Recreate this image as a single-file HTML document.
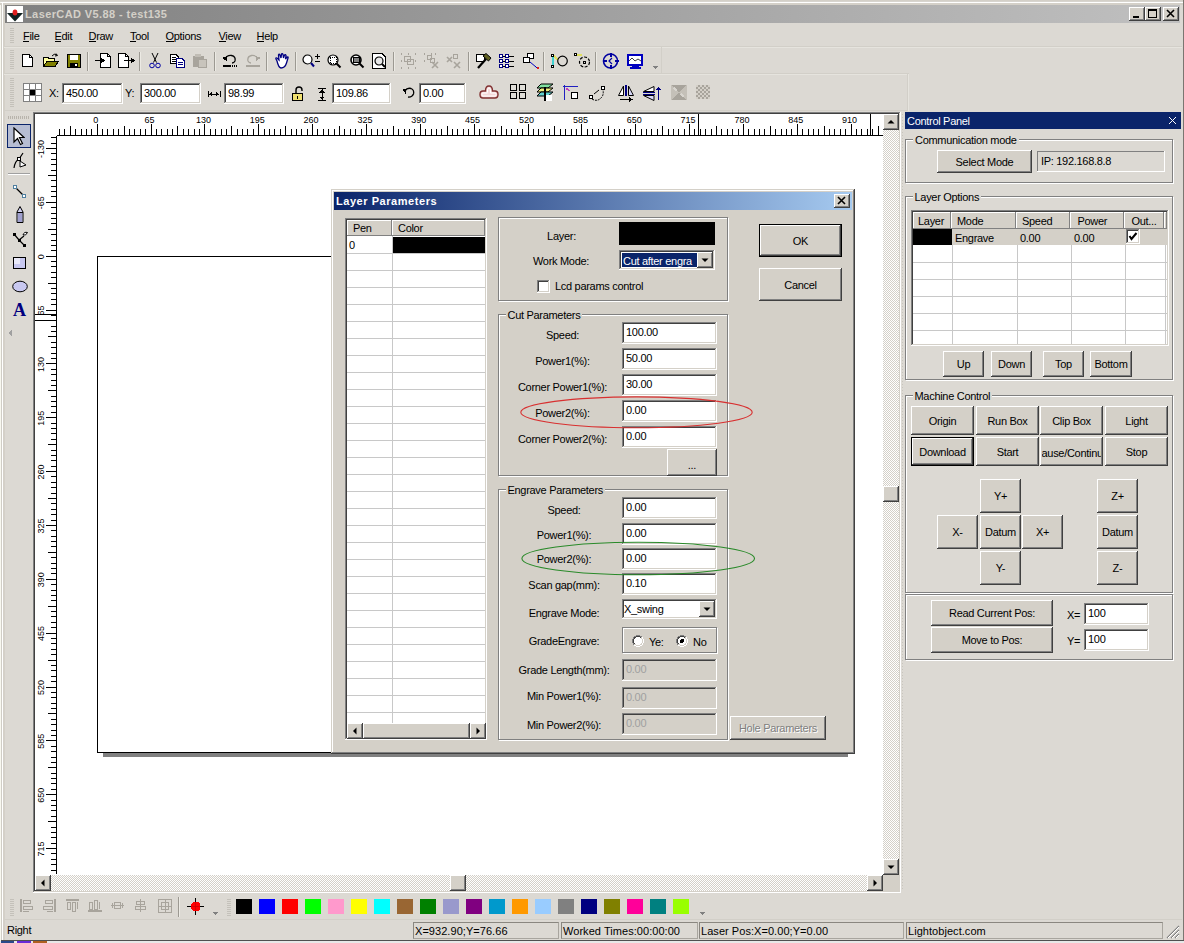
<!DOCTYPE html><html><head><meta charset="utf-8"><style>
*{margin:0;padding:0;box-sizing:border-box}
html,body{width:1184px;height:943px;overflow:hidden;background:#dcd9d3;font-family:"Liberation Sans",sans-serif;font-size:11px;color:#000}
div{position:absolute}
.t{white-space:nowrap;line-height:13px;letter-spacing:-0.3px}
.btn{background:#d4d0c8;box-shadow:inset -1px -1px #404040,inset 1px 1px #fff,inset -2px -2px #808080,inset 2px 2px #d4d0c8}
.sunk{box-shadow:inset -1px -1px #fff,inset 1px 1px #808080,inset -2px -2px #d4d0c8,inset 2px 2px #404040}
.etch{border:1px solid #808080;box-shadow:1px 1px 0 0 #fff,inset 1px 1px 0 0 #fff}
.chk{background:repeating-conic-gradient(#d4d0c8 0 25%,#fff 0 50%) 0 0/2px 2px}
.sunk1{box-shadow:inset -1px -1px #fff,inset 1px 1px #808080}.hdr{background:#d4d0c8;box-shadow:inset -1px -1px #808080,inset 1px 1px #fff}</style></head><body><div style="left:0px;top:0px;width:1px;height:943px;background:#f8f8f0"></div>
<div style="left:1px;top:0px;width:1px;height:941px;background:#d0cdc6"></div>
<div style="left:3px;top:0px;width:2px;height:941px;background:#d4d0c8"></div>
<div style="left:0px;top:0px;width:1184px;height:1px;background:#d4d0c8"></div>
<div style="left:0px;top:1px;width:1184px;height:1px;background:#d8d5cf"></div>
<div style="left:0px;top:3px;width:1184px;height:2px;background:#d4d0c8"></div>
<div style="left:1px;top:2px;width:1182px;height:1px;background:#fff"></div>
<div style="left:2px;top:2px;width:1px;height:938px;background:#fff"></div>
<div style="left:1183px;top:0px;width:1px;height:941px;background:#7a7670"></div>
<div style="left:1px;top:940px;width:1183px;height:1px;background:#505050"></div>
<div style="left:0px;top:941px;width:1184px;height:2px;background:#e8e8e8"></div>
<div style="left:1px;top:941px;width:13px;height:2px;background:#2a4a8a"></div>
<div style="left:17px;top:941px;width:14px;height:2px;background:#6a2ad8"></div>
<div style="left:33px;top:941px;width:14px;height:2px;background:#b06020"></div>
<div style="left:5px;top:5px;width:1175px;height:18px;background:linear-gradient(to right,#808080,#c0c0c0)"></div>
<svg style="position:absolute;left:7px;top:6px" width="16" height="16" viewBox="0 0 16 16" shape-rendering="crispEdges"><rect x="0" y="0" width="16" height="16" fill="#fff"/><polygon points="0,7 16,7 8,15.5" fill="#102020" shape-rendering="auto"/><ellipse cx="8" cy="6.5" rx="2.4" ry="3" fill="#e02020" shape-rendering="auto"/></svg>
<div class="t" style="left:25px;top:8px;font-weight:bold;color:#d4d0c8;letter-spacing:0.4px">LaserCAD V5.88 - test135</div>
<div class="btn" style="left:1129px;top:7px;width:16px;height:14px;"></div>
<div class="btn" style="left:1145px;top:7px;width:16px;height:14px;"></div>
<div class="btn" style="left:1163px;top:7px;width:16px;height:14px;"></div>
<svg style="position:absolute;left:1129px;top:7px" width="16" height="14" viewBox="0 0 16 14" shape-rendering="crispEdges"><rect x="4" y="9" width="6" height="2" fill="#000"/></svg>
<svg style="position:absolute;left:1145px;top:7px" width="16" height="14" viewBox="0 0 16 14" shape-rendering="crispEdges"><rect x="3.5" y="2.5" width="8" height="8" fill="none" stroke="#000"/><rect x="3" y="2" width="9" height="2" fill="#000"/></svg>
<svg style="position:absolute;left:1163px;top:7px" width="16" height="14" viewBox="0 0 16 14" shape-rendering="crispEdges"><path d="M4 3 L11 10 M11 3 L4 10" stroke="#000" stroke-width="1.6" shape-rendering="auto"/></svg>
<div style="left:10px;top:28px;width:4px;height:1px;background:#c4c1ba"></div>
<div style="left:10px;top:30px;width:4px;height:1px;background:#c4c1ba"></div>
<div style="left:10px;top:32px;width:4px;height:1px;background:#c4c1ba"></div>
<div style="left:10px;top:34px;width:4px;height:1px;background:#c4c1ba"></div>
<div style="left:10px;top:36px;width:4px;height:1px;background:#c4c1ba"></div>
<div style="left:10px;top:38px;width:4px;height:1px;background:#c4c1ba"></div>
<div style="left:10px;top:40px;width:4px;height:1px;background:#c4c1ba"></div>
<div style="left:10px;top:42px;width:4px;height:1px;background:#c4c1ba"></div>
<div class="t" style="left:23px;top:29.5px;">File</div>
<div style="left:23px;top:41px;width:6px;height:1px;background:#000"></div>
<div class="t" style="left:54.5px;top:29.5px;">Edit</div>
<div style="left:54.5px;top:41px;width:6px;height:1px;background:#000"></div>
<div class="t" style="left:88.5px;top:29.5px;">Draw</div>
<div style="left:88.5px;top:41px;width:7px;height:1px;background:#000"></div>
<div class="t" style="left:130px;top:29.5px;">Tool</div>
<div style="left:130px;top:41px;width:6px;height:1px;background:#000"></div>
<div class="t" style="left:165.5px;top:29.5px;">Options</div>
<div style="left:165.5px;top:41px;width:8px;height:1px;background:#000"></div>
<div class="t" style="left:218.5px;top:29.5px;">View</div>
<div style="left:218.5px;top:41px;width:7px;height:1px;background:#000"></div>
<div class="t" style="left:256.5px;top:29.5px;">Help</div>
<div style="left:256.5px;top:41px;width:7px;height:1px;background:#000"></div>
<div style="left:4px;top:46px;width:1178px;height:1px;background:#d2cfc8"></div>
<div style="left:4px;top:47px;width:1178px;height:1px;background:#e6e4de"></div>
<div style="left:10px;top:50px;width:4px;height:1px;background:#c4c1ba"></div>
<div style="left:10px;top:52px;width:4px;height:1px;background:#c4c1ba"></div>
<div style="left:10px;top:54px;width:4px;height:1px;background:#c4c1ba"></div>
<div style="left:10px;top:56px;width:4px;height:1px;background:#c4c1ba"></div>
<div style="left:10px;top:58px;width:4px;height:1px;background:#c4c1ba"></div>
<div style="left:10px;top:60px;width:4px;height:1px;background:#c4c1ba"></div>
<div style="left:10px;top:62px;width:4px;height:1px;background:#c4c1ba"></div>
<div style="left:10px;top:64px;width:4px;height:1px;background:#c4c1ba"></div>
<div style="left:10px;top:66px;width:4px;height:1px;background:#c4c1ba"></div>
<div style="left:10px;top:68px;width:4px;height:1px;background:#c4c1ba"></div>
<div style="left:4px;top:73px;width:905px;height:1px;background:#d2cfc8"></div>
<div style="left:4px;top:74px;width:905px;height:1px;background:#e6e4de"></div>
<div style="left:661px;top:47px;width:1px;height:26px;background:#d2cfc8"></div>
<svg style="position:absolute;left:21px;top:54px" width="13" height="14" viewBox="0 0 13 14" shape-rendering="crispEdges"><path d="M1.5 0.5 H8.5 L11.5 3.5 V12.5 H1.5 Z" fill="#fff" stroke="#000"/><path d="M8.5 0.5 V3.5 H11.5" fill="none" stroke="#000"/></svg>
<svg style="position:absolute;left:43px;top:53px" width="17" height="15" viewBox="0 0 17 15" shape-rendering="crispEdges"><path d="M0.5 4.5 H5 L6 5.5 H11.5 V13.5 H0.5 Z" fill="#ffffa0" stroke="#000"/><path d="M0.5 13.5 L4 8.5 H15.5 L12 13.5 Z" fill="#808000" stroke="#000"/><path d="M9 3 Q11 0 14 2 M13 0.5 L14.5 2.5 L12 3" fill="none" stroke="#000" shape-rendering="auto"/></svg>
<svg style="position:absolute;left:67px;top:54px" width="15" height="15" viewBox="0 0 15 15" shape-rendering="crispEdges"><rect x="0.5" y="0.5" width="13" height="13" fill="#808000" stroke="#000"/><rect x="3" y="1" width="8" height="5" fill="#fff"/><rect x="3" y="9" width="8" height="4" fill="#000"/><rect x="8" y="10" width="2" height="2" fill="#fff"/></svg>
<div style="left:87px;top:52px;width:1px;height:19px;background:#9c9992"></div>
<div style="left:88px;top:52px;width:1px;height:19px;background:#eceae4"></div>
<svg style="position:absolute;left:95px;top:53px" width="17" height="16" viewBox="0 0 17 16" shape-rendering="crispEdges"><path d="M5.5 0.5 H12.5 L15.5 3.5 V14.5 H5.5 Z" fill="#fff" stroke="#000"/><path d="M12.5 0.5 V3.5 H15.5" fill="none" stroke="#000"/><rect x="0" y="7" width="8" height="1" fill="#000"/><path d="M6 4.5 L10 7.5 L6 10.5 Z" fill="#000"/></svg>
<svg style="position:absolute;left:118px;top:53px" width="18" height="16" viewBox="0 0 18 16" shape-rendering="crispEdges"><path d="M0.5 0.5 H7.5 L10.5 3.5 V14.5 H0.5 Z" fill="#fff" stroke="#000"/><path d="M7.5 0.5 V3.5 H10.5" fill="none" stroke="#000"/><rect x="6" y="7" width="8" height="1" fill="#000"/><path d="M13 4.5 L17 7.5 L13 10.5 Z" fill="#000"/></svg>
<div style="left:139px;top:52px;width:1px;height:19px;background:#9c9992"></div>
<div style="left:140px;top:52px;width:1px;height:19px;background:#eceae4"></div>
<svg style="position:absolute;left:149px;top:53px" width="12" height="16" viewBox="0 0 12 16" shape-rendering="crispEdges"><path d="M3 0 L7.5 9.5 M9 0 L4.5 9.5" stroke="#000" fill="none" shape-rendering="auto"/><circle cx="3" cy="12.5" r="2.3" fill="none" stroke="#0000a0" shape-rendering="auto"/><circle cx="9" cy="12.5" r="2.3" fill="none" stroke="#0000a0" shape-rendering="auto"/></svg>
<svg style="position:absolute;left:170px;top:54px" width="16" height="14" viewBox="0 0 16 14" shape-rendering="crispEdges"><path d="M0.5 0.5 H6 L8.5 3 V9.5 H0.5 Z" fill="#fff" stroke="#000"/><path d="M2 3.5 H6 M2 5.5 H6 M2 7.5 H6" stroke="#000"/><path d="M6.5 4.5 H12 L14.5 7 V13.5 H6.5 Z" fill="#fff" stroke="#000080"/><path d="M8 8.5 H13 M8 10.5 H13" stroke="#000080"/></svg>
<svg style="position:absolute;left:192px;top:53px" width="15" height="15" viewBox="0 0 15 15" shape-rendering="crispEdges"><rect x="0.5" y="2.5" width="11" height="11" fill="#a8a49c"/><rect x="3" y="0.5" width="6" height="3" fill="#c0bcb4"/><rect x="6.5" y="6.5" width="8" height="8" fill="#c8c4bc" stroke="#a8a49c"/></svg>
<div style="left:214px;top:52px;width:1px;height:19px;background:#9c9992"></div>
<div style="left:215px;top:52px;width:1px;height:19px;background:#eceae4"></div>
<svg style="position:absolute;left:222px;top:54px" width="16" height="13" viewBox="0 0 16 13" shape-rendering="crispEdges"><path d="M3 5 Q5 1 9.5 1.5 Q14 2.5 13 7 Q12 9 10 9" fill="none" stroke="#000" stroke-width="1.3" shape-rendering="auto"/><path d="M0 4 L5 2 L5 7 Z" fill="#000"/><rect x="1" y="11" width="8" height="2" fill="#000"/><rect x="10" y="11" width="1" height="2" fill="#000"/><rect x="12" y="11" width="1" height="2" fill="#000"/><rect x="14" y="11" width="1" height="2" fill="#000"/></svg>
<svg style="position:absolute;left:245px;top:54px" width="16" height="13" viewBox="0 0 16 13" shape-rendering="crispEdges"><path d="M13 5 Q11 1 6.5 1.5 Q2 2.5 3 7 Q4 9 6 9" fill="none" stroke="#a8a49c" stroke-width="1.3" shape-rendering="auto"/><path d="M16 4 L11 2 L11 7 Z" fill="#a8a49c"/><rect x="1" y="11" width="14" height="2" fill="#a8a49c"/></svg>
<div style="left:266px;top:52px;width:1px;height:19px;background:#9c9992"></div>
<div style="left:267px;top:52px;width:1px;height:19px;background:#eceae4"></div>
<svg style="position:absolute;left:274px;top:53px" width="17" height="16" viewBox="0 0 17 16" shape-rendering="crispEdges"><path d="M3 8 L2 6 Q1.5 4.5 3 5 L5 7 L4.5 2 Q5 0.5 6 2 L7 5 L7.5 1 Q8.5 0 9 1.5 L9.5 5 L10.5 2 Q11.5 1 12 2.5 L11.5 6 L13 4 Q14.5 3.5 14 5 L12.5 10 Q11 15 7 15 Q4.5 14.5 3 8 Z" fill="#fff" stroke="#000080" stroke-width="1.3" shape-rendering="auto"/></svg>
<div style="left:295px;top:52px;width:1px;height:19px;background:#9c9992"></div>
<div style="left:296px;top:52px;width:1px;height:19px;background:#eceae4"></div>
<svg style="position:absolute;left:302px;top:54px" width="19" height="15" viewBox="0 0 19 15" shape-rendering="crispEdges"><circle cx="5.5" cy="5.5" r="4.5" fill="#fff" stroke="#000" stroke-width="1.2" shape-rendering="auto"/><path d="M9 9 L12 12.5" stroke="#000080" stroke-width="2" shape-rendering="auto"/><path d="M13 2.5 H18 M15.5 0 V5 M13 7.5 H18" stroke="#000"/></svg>
<svg style="position:absolute;left:327px;top:54px" width="16" height="15" viewBox="0 0 16 15" shape-rendering="crispEdges"><circle cx="6" cy="6" r="5" fill="#fff" stroke="#000" stroke-width="1.2" shape-rendering="auto"/><rect x="3" y="3" width="6" height="6" fill="none" stroke="#000" stroke-dasharray="1 1"/><path d="M9.5 9.5 L13.5 13.5" stroke="#000" stroke-width="2" shape-rendering="auto"/></svg>
<svg style="position:absolute;left:350px;top:54px" width="16" height="15" viewBox="0 0 16 15" shape-rendering="crispEdges"><circle cx="6" cy="6" r="5" fill="#fff" stroke="#000" stroke-width="1.6" shape-rendering="auto"/><rect x="3" y="3" width="6" height="5" fill="#808080" stroke="#000"/><path d="M9.5 9.5 L13.5 13.5" stroke="#000" stroke-width="2" shape-rendering="auto"/></svg>
<svg style="position:absolute;left:372px;top:53px" width="15" height="16" viewBox="0 0 15 16" shape-rendering="crispEdges"><path d="M0.5 0.5 H10 L13.5 4 V15.5 H0.5 Z" fill="#fff" stroke="#000"/><circle cx="7" cy="8" r="4" fill="#e8e8e8" stroke="#000" stroke-width="1.2" shape-rendering="auto"/><path d="M10 11 L13 14" stroke="#000" stroke-width="2" shape-rendering="auto"/></svg>
<div style="left:393px;top:52px;width:1px;height:19px;background:#9c9992"></div>
<div style="left:394px;top:52px;width:1px;height:19px;background:#eceae4"></div>
<svg style="position:absolute;left:400px;top:53px" width="17" height="16" viewBox="0 0 17 16" shape-rendering="crispEdges"><rect x="4.5" y="3.5" width="6" height="5" fill="none" stroke="#a8a49c"/><rect x="7.5" y="6.5" width="6" height="5" fill="none" stroke="#a8a49c"/><path d="M1 1 h1 M8 1 h1 M15 1 h1 M1 8 h1 M15 8 h1 M1 15 h1 M8 15 h1 M15 15 h1" stroke="#a8a49c" stroke-width="2"/></svg>
<svg style="position:absolute;left:423px;top:53px" width="17" height="16" viewBox="0 0 17 16" shape-rendering="crispEdges"><rect x="4.5" y="2.5" width="4" height="4" fill="none" stroke="#a8a49c"/><rect x="7.5" y="5.5" width="4" height="4" fill="none" stroke="#a8a49c"/><path d="M1 1 h1 M8 1 h1 M1 8 h1 M12 1 h1" stroke="#a8a49c" stroke-width="2"/><path d="M9 9 L15 15 M15 9 L9 15" stroke="#a8a49c" stroke-width="1.6" shape-rendering="auto"/></svg>
<svg style="position:absolute;left:446px;top:53px" width="17" height="16" viewBox="0 0 17 16" shape-rendering="crispEdges"><path d="M1 4 L6 9 M6 4 L1 9 M8 9 L14 15 M14 9 L8 15" stroke="#a8a49c" stroke-width="1.6" shape-rendering="auto"/><rect x="7.5" y="1.5" width="4" height="4" fill="none" stroke="#a8a49c"/></svg>
<div style="left:468px;top:52px;width:1px;height:19px;background:#9c9992"></div>
<div style="left:469px;top:52px;width:1px;height:19px;background:#eceae4"></div>
<svg style="position:absolute;left:476px;top:53px" width="17" height="16" viewBox="0 0 17 16" shape-rendering="crispEdges"><rect x="0.5" y="1.5" width="8" height="7" fill="#fff" stroke="#000"/><path d="M2 15 L10 6" stroke="#000" stroke-width="2.2" shape-rendering="auto"/><path d="M7 3 L10 0.5 L15 5 L12.5 8 Z" fill="#606020" stroke="#000" shape-rendering="auto"/></svg>
<svg style="position:absolute;left:499px;top:54px" width="16" height="14" viewBox="0 0 16 14" shape-rendering="crispEdges"><rect x="0.5" y="0.5" width="3" height="3" fill="#fff" stroke="#000080"/><rect x="6.5" y="0.5" width="3" height="3" fill="#fff" stroke="#000080"/><path d="M4 2.0 H6 M10 2.0 H15" stroke="#000"/><rect x="0.5" y="5.5" width="3" height="3" fill="#fff" stroke="#000080"/><rect x="6.5" y="5.5" width="3" height="3" fill="#fff" stroke="#000080"/><path d="M4 7.0 H6 M10 7.0 H15" stroke="#000"/><rect x="0.5" y="10.5" width="3" height="3" fill="#fff" stroke="#000080"/><rect x="6.5" y="10.5" width="3" height="3" fill="#fff" stroke="#000080"/><path d="M4 12.0 H6 M10 12.0 H15" stroke="#000"/></svg>
<svg style="position:absolute;left:523px;top:53px" width="17" height="16" viewBox="0 0 17 16" shape-rendering="crispEdges"><rect x="4.5" y="0.5" width="6" height="5" fill="#fff" stroke="#000"/><rect x="0.5" y="4.5" width="6" height="5" fill="#fff" stroke="#000"/><path d="M7 9 L13 14" stroke="#0000c0" shape-rendering="auto"/><path d="M11 14 L14 15 L13 12 Z" fill="#0000c0"/><rect x="14" y="14" width="2" height="2" fill="#e02020"/></svg>
<div style="left:543px;top:52px;width:1px;height:19px;background:#9c9992"></div>
<div style="left:544px;top:52px;width:1px;height:19px;background:#eceae4"></div>
<svg style="position:absolute;left:551px;top:54px" width="18" height="14" viewBox="0 0 18 14" shape-rendering="crispEdges"><path d="M2 1 V12" stroke="#40d0d0" stroke-width="2"/><path d="M2 1 L7 6" stroke="#e0e060" stroke-width="2"/><rect x="0.5" y="0.5" width="2" height="2" fill="#fff" stroke="#000"/><rect x="0.5" y="11.5" width="2" height="2" fill="#fff" stroke="#000"/><circle cx="11.5" cy="7" r="4.8" fill="none" stroke="#000" stroke-width="1.2" shape-rendering="auto"/></svg>
<svg style="position:absolute;left:574px;top:53px" width="17" height="16" viewBox="0 0 17 16" shape-rendering="crispEdges"><path d="M2 2 H8" stroke="#e0e060" stroke-width="2"/><rect x="0.5" y="0.5" width="2" height="2" fill="#fff" stroke="#000"/><circle cx="10.5" cy="9" r="5" fill="none" stroke="#000" stroke-width="1.2" stroke-dasharray="3 1.5" shape-rendering="auto"/><rect x="9.5" y="8" width="2" height="2" fill="none" stroke="#000"/></svg>
<div style="left:595px;top:52px;width:1px;height:19px;background:#9c9992"></div>
<div style="left:596px;top:52px;width:1px;height:19px;background:#eceae4"></div>
<svg style="position:absolute;left:602px;top:53px" width="17" height="16" viewBox="0 0 17 16" shape-rendering="crispEdges"><circle cx="8.5" cy="8" r="7" fill="none" stroke="#0000a0" stroke-width="1.6" shape-rendering="auto"/><path d="M8.5 0 V4 M8.5 12 V16 M0.5 8 H4.5 M12.5 8 H16.5" stroke="#0000a0" stroke-width="2"/><path d="M10 5 L7 8 L10 11" fill="none" stroke="#0000a0" stroke-width="1.2" shape-rendering="auto"/></svg>
<svg style="position:absolute;left:627px;top:54px" width="17" height="15" viewBox="0 0 17 15" shape-rendering="crispEdges"><rect x="0.5" y="0.5" width="15" height="11" fill="#fff" stroke="#0000c0"/><rect x="1.5" y="1.5" width="13" height="9" fill="none" stroke="#0000c0"/><path d="M2 7 L5 4 L8 7 L11 5 L14 7" fill="none" stroke="#404040" shape-rendering="auto"/><rect x="5" y="12" width="7" height="2" fill="#0000c0"/><rect x="3" y="13" width="11" height="2" fill="#0000c0"/></svg>
<svg style="position:absolute;left:652px;top:66px" width="6" height="4" viewBox="0 0 6 4" shape-rendering="crispEdges"><path d="M0 0 H6 L3 3 Z" fill="#808080"/></svg>
<div style="left:10px;top:78px;width:4px;height:1px;background:#c4c1ba"></div>
<div style="left:10px;top:80px;width:4px;height:1px;background:#c4c1ba"></div>
<div style="left:10px;top:82px;width:4px;height:1px;background:#c4c1ba"></div>
<div style="left:10px;top:84px;width:4px;height:1px;background:#c4c1ba"></div>
<div style="left:10px;top:86px;width:4px;height:1px;background:#c4c1ba"></div>
<div style="left:10px;top:88px;width:4px;height:1px;background:#c4c1ba"></div>
<div style="left:10px;top:90px;width:4px;height:1px;background:#c4c1ba"></div>
<div style="left:10px;top:92px;width:4px;height:1px;background:#c4c1ba"></div>
<div style="left:10px;top:94px;width:4px;height:1px;background:#c4c1ba"></div>
<div style="left:10px;top:96px;width:4px;height:1px;background:#c4c1ba"></div>
<div style="left:10px;top:98px;width:4px;height:1px;background:#c4c1ba"></div>
<div style="left:10px;top:100px;width:4px;height:1px;background:#c4c1ba"></div>
<div style="left:10px;top:102px;width:4px;height:1px;background:#c4c1ba"></div>
<div style="left:10px;top:104px;width:4px;height:1px;background:#c4c1ba"></div>
<div style="left:10px;top:106px;width:4px;height:1px;background:#c4c1ba"></div>
<div style="left:4px;top:110px;width:905px;height:1px;background:#d2cfc8"></div>
<div style="left:907px;top:74px;width:1px;height:37px;background:#d2cfc8"></div>
<div style="left:908px;top:74px;width:1px;height:37px;background:#e6e4de"></div>
<svg style="position:absolute;left:23px;top:83px" width="19" height="19" viewBox="0 0 19 19" shape-rendering="crispEdges"><rect x="0.5" y="0.5" width="18" height="18" fill="#fff" stroke="#808080"/><path d="M6.5 0 V19 M12.5 0 V19 M0 6.5 H19 M0 12.5 H19" stroke="#808080"/><rect x="7" y="7" width="5" height="5" fill="#000"/></svg>
<div class="t" style="left:49px;top:87px;">X:</div>
<div class="sunk" style="left:62px;top:83px;width:61px;height:21px;background:#fff"></div>
<div class="t" style="left:66px;top:87px;color:#000">450.00</div>
<div class="t" style="left:125px;top:87px;">Y:</div>
<div class="sunk" style="left:140px;top:83px;width:61px;height:21px;background:#fff"></div>
<div class="t" style="left:144px;top:87px;color:#000">300.00</div>
<svg style="position:absolute;left:208px;top:91px" width="13" height="6" viewBox="0 0 13 6" shape-rendering="crispEdges"><path d="M0 0 V6 M12 0 V6 M1 3 H11" stroke="#000"/><path d="M1 3 L4 0.5 V5.5 Z M11 3 L8 0.5 V5.5 Z" fill="#000"/></svg>
<div class="sunk" style="left:224px;top:83px;width:60px;height:21px;background:#fff"></div>
<div class="t" style="left:228px;top:87px;color:#000">98.99</div>
<svg style="position:absolute;left:291px;top:86px" width="14" height="15" viewBox="0 0 14 15" shape-rendering="crispEdges"><path d="M5 7 V4 Q5 1 8 1 Q11 1 11 4 V5" fill="none" stroke="#000" stroke-width="1.4" shape-rendering="auto"/><rect x="1.5" y="7.5" width="10" height="7" fill="#f0e070" stroke="#000"/><rect x="6" y="10" width="1" height="3" fill="#000"/></svg>
<svg style="position:absolute;left:318px;top:88px" width="8" height="13" viewBox="0 0 8 13" shape-rendering="crispEdges"><path d="M0 0.5 H8 M0 12.5 H8 M4 1 V12" stroke="#000"/><path d="M4 1 L1 4.5 H7 Z M4 12 L1 8.5 H7 Z" fill="#000"/></svg>
<div class="sunk" style="left:332px;top:83px;width:59px;height:21px;background:#fff"></div>
<div class="t" style="left:336px;top:87px;color:#000">109.86</div>
<svg style="position:absolute;left:402px;top:86px" width="14" height="14" viewBox="0 0 14 14" shape-rendering="crispEdges"><path d="M3 5 Q5 1.5 9 2.5 Q12.5 4 11.5 8 Q10 11.5 6 11" fill="none" stroke="#000" stroke-width="1.3" shape-rendering="auto"/><path d="M0.5 3.5 L5 3 L3.5 7.5 Z" fill="#000"/></svg>
<div class="sunk" style="left:419px;top:83px;width:47px;height:21px;background:#fff"></div>
<div class="t" style="left:423px;top:87px;color:#000">0.00</div>
<svg style="position:absolute;left:479px;top:85px" width="20" height="14" viewBox="0 0 20 14" shape-rendering="crispEdges"><path d="M6.5 6 C6.5 3 7.5 1 10 1 C12.5 1 13.5 3 13.5 6 H16 C18 6 19 7.5 19 9.5 C19 11.5 18 13 16 13 H4 C2 13 1 11.5 1 9.5 C1 7.5 2 6 4 6 Z" fill="#f4d8d8" stroke="#803030" stroke-width="1.4" shape-rendering="auto"/><path d="M8.5 7.5 V5 Q8.5 3 10 3 Q11.5 3 11.5 5 V8 H16 Q17 8 17 9.5 Q17 11 16 11 H4 Q3 11 3 9.5 Q3 8 4 8 H8.5" fill="none" stroke="#fff" shape-rendering="auto"/></svg>
<svg style="position:absolute;left:510px;top:84px" width="17" height="16" viewBox="0 0 17 16" shape-rendering="crispEdges"><g fill="#e0ded8" stroke="#000" stroke-width="1.3"><rect x="0.65" y="0.65" width="5.7" height="5.7"/><rect x="9.65" y="0.65" width="5.7" height="5.7"/><rect x="0.65" y="8.65" width="5.7" height="5.7"/><rect x="9.65" y="8.65" width="5.7" height="5.7"/></g></svg>
<svg style="position:absolute;left:537px;top:83px" width="17" height="19" viewBox="0 0 17 19" shape-rendering="crispEdges"><path d="M4 1 H16 L11 5 H0 Z" fill="#80e0a0" stroke="#000" shape-rendering="auto"/><path d="M4 5 H16 L11 9 H0 Z" fill="#f0f080" stroke="#000" shape-rendering="auto"/><path d="M4 9 H16 L11 13 H0 Z" fill="#60d0d0" stroke="#000" shape-rendering="auto"/><rect x="9" y="12" width="6" height="6" fill="#fff"/><path d="M8 4 V18" stroke="#000" stroke-width="1.4"/></svg>
<svg style="position:absolute;left:563px;top:85px" width="16" height="15" viewBox="0 0 16 15" shape-rendering="crispEdges"><path d="M1.5 0 V15 M0 1.5 H15" stroke="#2020c0" stroke-width="1.3"/><rect x="8.5" y="7.5" width="6" height="6" fill="#fff" stroke="#000"/><path d="M3 3 L7 6" stroke="#c040c0"/><path d="M3 3 L5 3 L3 5 Z" fill="#c040c0"/></svg>
<svg style="position:absolute;left:589px;top:86px" width="17" height="15" viewBox="0 0 17 15" shape-rendering="crispEdges"><rect x="0.5" y="9.5" width="3" height="3" fill="#fff" stroke="#000"/><rect x="12.5" y="0.5" width="3" height="3" fill="#fff" stroke="#000"/><path d="M3 13 Q8 16 12 12 Q15 9 14 4" fill="none" stroke="#000" stroke-dasharray="2 1" shape-rendering="auto"/><path d="M5 8 L10 4" stroke="#000" shape-rendering="auto"/></svg>
<svg style="position:absolute;left:618px;top:85px" width="16" height="17" viewBox="0 0 16 17" shape-rendering="crispEdges"><path d="M5.5 1 L0.5 10.5 H5.5 Z" fill="#fff" stroke="#000" shape-rendering="auto"/><path d="M10.5 1 L15.5 10.5 H10.5 Z" fill="#d8d8f8" stroke="#000" shape-rendering="auto"/><path d="M7.5 0 V11 M8.5 0 V11" stroke="#000080"/><path d="M2 14.5 H12" stroke="#000" stroke-width="1.2"/><path d="M15 14.5 L11 12 V17 Z" fill="#000"/></svg>
<svg style="position:absolute;left:643px;top:86px" width="18" height="15" viewBox="0 0 18 15" shape-rendering="crispEdges"><path d="M11 0.5 L0.5 5.5 H11 Z" fill="#fff" stroke="#000" shape-rendering="auto"/><path d="M11 14.5 L0.5 9.5 H11 Z" fill="#d8d8f8" stroke="#000" shape-rendering="auto"/><path d="M0 6.5 H12 M0 8.5 H12" stroke="#000080"/><path d="M15.5 14 V3" stroke="#000080" stroke-width="1.4"/><path d="M15.5 0.5 L13 4 H18 Z" fill="#000080"/></svg>
<svg style="position:absolute;left:671px;top:85px" width="16" height="15" viewBox="0 0 16 15" shape-rendering="crispEdges"><rect x="0" y="0" width="16" height="15" fill="#c4c0b8"/><path d="M0 0 H16 L8 7.5 Z M0 15 H16 L8 7.5 Z" fill="#a8a49c"/><path d="M3 3 L6 6 M13 12 L10 9" stroke="#d8d5cf" stroke-width="2"/></svg>
<div class="chk" style="left:696px;top:85px;width:14px;height:14px;background:repeating-conic-gradient(#a8a49c 0 25%,#d4d0c8 0 50%) 0 0/4px 4px"></div>
<div class="sunk" style="left:33px;top:112px;width:868px;height:781px;background:#fff"></div>
<svg style="position:absolute;left:0;top:0" width="1184" height="943"><rect x="59" y="129" width="1" height="6" fill="#000"/><rect x="64" y="129" width="1" height="6" fill="#000"/><rect x="70" y="126" width="1" height="9" fill="#000"/><rect x="75" y="129" width="1" height="6" fill="#000"/><rect x="81" y="129" width="1" height="6" fill="#000"/><rect x="86" y="129" width="1" height="6" fill="#000"/><rect x="91" y="129" width="1" height="6" fill="#000"/><rect x="97" y="124" width="1" height="11" fill="#000"/><rect x="102" y="129" width="1" height="6" fill="#000"/><rect x="107" y="129" width="1" height="6" fill="#000"/><rect x="113" y="129" width="1" height="6" fill="#000"/><rect x="118" y="129" width="1" height="6" fill="#000"/><rect x="124" y="126" width="1" height="9" fill="#000"/><rect x="129" y="129" width="1" height="6" fill="#000"/><rect x="134" y="129" width="1" height="6" fill="#000"/><rect x="140" y="129" width="1" height="6" fill="#000"/><rect x="145" y="129" width="1" height="6" fill="#000"/><rect x="151" y="124" width="1" height="11" fill="#000"/><rect x="156" y="129" width="1" height="6" fill="#000"/><rect x="161" y="129" width="1" height="6" fill="#000"/><rect x="167" y="129" width="1" height="6" fill="#000"/><rect x="172" y="129" width="1" height="6" fill="#000"/><rect x="177" y="126" width="1" height="9" fill="#000"/><rect x="183" y="129" width="1" height="6" fill="#000"/><rect x="188" y="129" width="1" height="6" fill="#000"/><rect x="194" y="129" width="1" height="6" fill="#000"/><rect x="199" y="129" width="1" height="6" fill="#000"/><rect x="204" y="124" width="1" height="11" fill="#000"/><rect x="210" y="129" width="1" height="6" fill="#000"/><rect x="215" y="129" width="1" height="6" fill="#000"/><rect x="221" y="129" width="1" height="6" fill="#000"/><rect x="226" y="129" width="1" height="6" fill="#000"/><rect x="231" y="126" width="1" height="9" fill="#000"/><rect x="237" y="129" width="1" height="6" fill="#000"/><rect x="242" y="129" width="1" height="6" fill="#000"/><rect x="247" y="129" width="1" height="6" fill="#000"/><rect x="253" y="129" width="1" height="6" fill="#000"/><rect x="258" y="124" width="1" height="11" fill="#000"/><rect x="264" y="129" width="1" height="6" fill="#000"/><rect x="269" y="129" width="1" height="6" fill="#000"/><rect x="274" y="129" width="1" height="6" fill="#000"/><rect x="280" y="129" width="1" height="6" fill="#000"/><rect x="285" y="126" width="1" height="9" fill="#000"/><rect x="291" y="129" width="1" height="6" fill="#000"/><rect x="296" y="129" width="1" height="6" fill="#000"/><rect x="301" y="129" width="1" height="6" fill="#000"/><rect x="307" y="129" width="1" height="6" fill="#000"/><rect x="312" y="124" width="1" height="11" fill="#000"/><rect x="317" y="129" width="1" height="6" fill="#000"/><rect x="323" y="129" width="1" height="6" fill="#000"/><rect x="328" y="129" width="1" height="6" fill="#000"/><rect x="334" y="129" width="1" height="6" fill="#000"/><rect x="339" y="126" width="1" height="9" fill="#000"/><rect x="344" y="129" width="1" height="6" fill="#000"/><rect x="350" y="129" width="1" height="6" fill="#000"/><rect x="355" y="129" width="1" height="6" fill="#000"/><rect x="361" y="129" width="1" height="6" fill="#000"/><rect x="366" y="124" width="1" height="11" fill="#000"/><rect x="371" y="129" width="1" height="6" fill="#000"/><rect x="377" y="129" width="1" height="6" fill="#000"/><rect x="382" y="129" width="1" height="6" fill="#000"/><rect x="387" y="129" width="1" height="6" fill="#000"/><rect x="393" y="126" width="1" height="9" fill="#000"/><rect x="398" y="129" width="1" height="6" fill="#000"/><rect x="404" y="129" width="1" height="6" fill="#000"/><rect x="409" y="129" width="1" height="6" fill="#000"/><rect x="414" y="129" width="1" height="6" fill="#000"/><rect x="420" y="124" width="1" height="11" fill="#000"/><rect x="425" y="129" width="1" height="6" fill="#000"/><rect x="431" y="129" width="1" height="6" fill="#000"/><rect x="436" y="129" width="1" height="6" fill="#000"/><rect x="441" y="129" width="1" height="6" fill="#000"/><rect x="447" y="126" width="1" height="9" fill="#000"/><rect x="452" y="129" width="1" height="6" fill="#000"/><rect x="457" y="129" width="1" height="6" fill="#000"/><rect x="463" y="129" width="1" height="6" fill="#000"/><rect x="468" y="129" width="1" height="6" fill="#000"/><rect x="474" y="124" width="1" height="11" fill="#000"/><rect x="479" y="129" width="1" height="6" fill="#000"/><rect x="484" y="129" width="1" height="6" fill="#000"/><rect x="490" y="129" width="1" height="6" fill="#000"/><rect x="495" y="129" width="1" height="6" fill="#000"/><rect x="501" y="126" width="1" height="9" fill="#000"/><rect x="506" y="129" width="1" height="6" fill="#000"/><rect x="511" y="129" width="1" height="6" fill="#000"/><rect x="517" y="129" width="1" height="6" fill="#000"/><rect x="522" y="129" width="1" height="6" fill="#000"/><rect x="528" y="124" width="1" height="11" fill="#000"/><rect x="533" y="129" width="1" height="6" fill="#000"/><rect x="538" y="129" width="1" height="6" fill="#000"/><rect x="544" y="129" width="1" height="6" fill="#000"/><rect x="549" y="129" width="1" height="6" fill="#000"/><rect x="554" y="126" width="1" height="9" fill="#000"/><rect x="560" y="129" width="1" height="6" fill="#000"/><rect x="565" y="129" width="1" height="6" fill="#000"/><rect x="571" y="129" width="1" height="6" fill="#000"/><rect x="576" y="129" width="1" height="6" fill="#000"/><rect x="581" y="124" width="1" height="11" fill="#000"/><rect x="587" y="129" width="1" height="6" fill="#000"/><rect x="592" y="129" width="1" height="6" fill="#000"/><rect x="598" y="129" width="1" height="6" fill="#000"/><rect x="603" y="129" width="1" height="6" fill="#000"/><rect x="608" y="126" width="1" height="9" fill="#000"/><rect x="614" y="129" width="1" height="6" fill="#000"/><rect x="619" y="129" width="1" height="6" fill="#000"/><rect x="624" y="129" width="1" height="6" fill="#000"/><rect x="630" y="129" width="1" height="6" fill="#000"/><rect x="635" y="124" width="1" height="11" fill="#000"/><rect x="641" y="129" width="1" height="6" fill="#000"/><rect x="646" y="129" width="1" height="6" fill="#000"/><rect x="651" y="129" width="1" height="6" fill="#000"/><rect x="657" y="129" width="1" height="6" fill="#000"/><rect x="662" y="126" width="1" height="9" fill="#000"/><rect x="668" y="129" width="1" height="6" fill="#000"/><rect x="673" y="129" width="1" height="6" fill="#000"/><rect x="678" y="129" width="1" height="6" fill="#000"/><rect x="684" y="129" width="1" height="6" fill="#000"/><rect x="689" y="124" width="1" height="11" fill="#000"/><rect x="694" y="129" width="1" height="6" fill="#000"/><rect x="700" y="129" width="1" height="6" fill="#000"/><rect x="705" y="129" width="1" height="6" fill="#000"/><rect x="711" y="129" width="1" height="6" fill="#000"/><rect x="716" y="126" width="1" height="9" fill="#000"/><rect x="721" y="129" width="1" height="6" fill="#000"/><rect x="727" y="129" width="1" height="6" fill="#000"/><rect x="732" y="129" width="1" height="6" fill="#000"/><rect x="738" y="129" width="1" height="6" fill="#000"/><rect x="743" y="124" width="1" height="11" fill="#000"/><rect x="748" y="129" width="1" height="6" fill="#000"/><rect x="754" y="129" width="1" height="6" fill="#000"/><rect x="759" y="129" width="1" height="6" fill="#000"/><rect x="764" y="129" width="1" height="6" fill="#000"/><rect x="770" y="126" width="1" height="9" fill="#000"/><rect x="775" y="129" width="1" height="6" fill="#000"/><rect x="781" y="129" width="1" height="6" fill="#000"/><rect x="786" y="129" width="1" height="6" fill="#000"/><rect x="791" y="129" width="1" height="6" fill="#000"/><rect x="797" y="124" width="1" height="11" fill="#000"/><rect x="802" y="129" width="1" height="6" fill="#000"/><rect x="808" y="129" width="1" height="6" fill="#000"/><rect x="813" y="129" width="1" height="6" fill="#000"/><rect x="818" y="129" width="1" height="6" fill="#000"/><rect x="824" y="126" width="1" height="9" fill="#000"/><rect x="829" y="129" width="1" height="6" fill="#000"/><rect x="834" y="129" width="1" height="6" fill="#000"/><rect x="840" y="129" width="1" height="6" fill="#000"/><rect x="845" y="129" width="1" height="6" fill="#000"/><rect x="851" y="124" width="1" height="11" fill="#000"/><rect x="856" y="129" width="1" height="6" fill="#000"/><rect x="861" y="129" width="1" height="6" fill="#000"/><rect x="867" y="129" width="1" height="6" fill="#000"/><rect x="872" y="129" width="1" height="6" fill="#000"/><rect x="878" y="126" width="1" height="9" fill="#000"/><rect x="57" y="135" width="826" height="1" fill="#000"/><rect x="870" y="114" width="1" height="22" fill="#000"/><rect x="698" y="114" width="1" height="22" fill="#000"/><rect x="51" y="137" width="5" height="1" fill="#000"/><rect x="51" y="143" width="5" height="1" fill="#000"/><rect x="46" y="148" width="10" height="1" fill="#000"/><rect x="51" y="153" width="5" height="1" fill="#000"/><rect x="51" y="159" width="5" height="1" fill="#000"/><rect x="51" y="164" width="5" height="1" fill="#000"/><rect x="51" y="170" width="5" height="1" fill="#000"/><rect x="48" y="175" width="8" height="1" fill="#000"/><rect x="51" y="180" width="5" height="1" fill="#000"/><rect x="51" y="186" width="5" height="1" fill="#000"/><rect x="51" y="191" width="5" height="1" fill="#000"/><rect x="51" y="196" width="5" height="1" fill="#000"/><rect x="46" y="202" width="10" height="1" fill="#000"/><rect x="51" y="207" width="5" height="1" fill="#000"/><rect x="51" y="213" width="5" height="1" fill="#000"/><rect x="51" y="218" width="5" height="1" fill="#000"/><rect x="51" y="223" width="5" height="1" fill="#000"/><rect x="48" y="229" width="8" height="1" fill="#000"/><rect x="51" y="234" width="5" height="1" fill="#000"/><rect x="51" y="240" width="5" height="1" fill="#000"/><rect x="51" y="245" width="5" height="1" fill="#000"/><rect x="51" y="250" width="5" height="1" fill="#000"/><rect x="46" y="256" width="10" height="1" fill="#000"/><rect x="51" y="261" width="5" height="1" fill="#000"/><rect x="51" y="266" width="5" height="1" fill="#000"/><rect x="51" y="272" width="5" height="1" fill="#000"/><rect x="51" y="277" width="5" height="1" fill="#000"/><rect x="48" y="283" width="8" height="1" fill="#000"/><rect x="51" y="288" width="5" height="1" fill="#000"/><rect x="51" y="293" width="5" height="1" fill="#000"/><rect x="51" y="299" width="5" height="1" fill="#000"/><rect x="51" y="304" width="5" height="1" fill="#000"/><rect x="46" y="310" width="10" height="1" fill="#000"/><rect x="51" y="315" width="5" height="1" fill="#000"/><rect x="51" y="320" width="5" height="1" fill="#000"/><rect x="51" y="326" width="5" height="1" fill="#000"/><rect x="51" y="331" width="5" height="1" fill="#000"/><rect x="48" y="336" width="8" height="1" fill="#000"/><rect x="51" y="342" width="5" height="1" fill="#000"/><rect x="51" y="347" width="5" height="1" fill="#000"/><rect x="51" y="353" width="5" height="1" fill="#000"/><rect x="51" y="358" width="5" height="1" fill="#000"/><rect x="46" y="363" width="10" height="1" fill="#000"/><rect x="51" y="369" width="5" height="1" fill="#000"/><rect x="51" y="374" width="5" height="1" fill="#000"/><rect x="51" y="380" width="5" height="1" fill="#000"/><rect x="51" y="385" width="5" height="1" fill="#000"/><rect x="48" y="390" width="8" height="1" fill="#000"/><rect x="51" y="396" width="5" height="1" fill="#000"/><rect x="51" y="401" width="5" height="1" fill="#000"/><rect x="51" y="406" width="5" height="1" fill="#000"/><rect x="51" y="412" width="5" height="1" fill="#000"/><rect x="46" y="417" width="10" height="1" fill="#000"/><rect x="51" y="423" width="5" height="1" fill="#000"/><rect x="51" y="428" width="5" height="1" fill="#000"/><rect x="51" y="433" width="5" height="1" fill="#000"/><rect x="51" y="439" width="5" height="1" fill="#000"/><rect x="48" y="444" width="8" height="1" fill="#000"/><rect x="51" y="450" width="5" height="1" fill="#000"/><rect x="51" y="455" width="5" height="1" fill="#000"/><rect x="51" y="460" width="5" height="1" fill="#000"/><rect x="51" y="466" width="5" height="1" fill="#000"/><rect x="46" y="471" width="10" height="1" fill="#000"/><rect x="51" y="476" width="5" height="1" fill="#000"/><rect x="51" y="482" width="5" height="1" fill="#000"/><rect x="51" y="487" width="5" height="1" fill="#000"/><rect x="51" y="493" width="5" height="1" fill="#000"/><rect x="48" y="498" width="8" height="1" fill="#000"/><rect x="51" y="503" width="5" height="1" fill="#000"/><rect x="51" y="509" width="5" height="1" fill="#000"/><rect x="51" y="514" width="5" height="1" fill="#000"/><rect x="51" y="520" width="5" height="1" fill="#000"/><rect x="46" y="525" width="10" height="1" fill="#000"/><rect x="51" y="530" width="5" height="1" fill="#000"/><rect x="51" y="536" width="5" height="1" fill="#000"/><rect x="51" y="541" width="5" height="1" fill="#000"/><rect x="51" y="546" width="5" height="1" fill="#000"/><rect x="48" y="552" width="8" height="1" fill="#000"/><rect x="51" y="557" width="5" height="1" fill="#000"/><rect x="51" y="563" width="5" height="1" fill="#000"/><rect x="51" y="568" width="5" height="1" fill="#000"/><rect x="51" y="573" width="5" height="1" fill="#000"/><rect x="46" y="579" width="10" height="1" fill="#000"/><rect x="51" y="584" width="5" height="1" fill="#000"/><rect x="51" y="590" width="5" height="1" fill="#000"/><rect x="51" y="595" width="5" height="1" fill="#000"/><rect x="51" y="600" width="5" height="1" fill="#000"/><rect x="48" y="606" width="8" height="1" fill="#000"/><rect x="51" y="611" width="5" height="1" fill="#000"/><rect x="51" y="616" width="5" height="1" fill="#000"/><rect x="51" y="622" width="5" height="1" fill="#000"/><rect x="51" y="627" width="5" height="1" fill="#000"/><rect x="46" y="633" width="10" height="1" fill="#000"/><rect x="51" y="638" width="5" height="1" fill="#000"/><rect x="51" y="643" width="5" height="1" fill="#000"/><rect x="51" y="649" width="5" height="1" fill="#000"/><rect x="51" y="654" width="5" height="1" fill="#000"/><rect x="48" y="660" width="8" height="1" fill="#000"/><rect x="51" y="665" width="5" height="1" fill="#000"/><rect x="51" y="670" width="5" height="1" fill="#000"/><rect x="51" y="676" width="5" height="1" fill="#000"/><rect x="51" y="681" width="5" height="1" fill="#000"/><rect x="46" y="687" width="10" height="1" fill="#000"/><rect x="51" y="692" width="5" height="1" fill="#000"/><rect x="51" y="697" width="5" height="1" fill="#000"/><rect x="51" y="703" width="5" height="1" fill="#000"/><rect x="51" y="708" width="5" height="1" fill="#000"/><rect x="48" y="713" width="8" height="1" fill="#000"/><rect x="51" y="719" width="5" height="1" fill="#000"/><rect x="51" y="724" width="5" height="1" fill="#000"/><rect x="51" y="730" width="5" height="1" fill="#000"/><rect x="51" y="735" width="5" height="1" fill="#000"/><rect x="46" y="740" width="10" height="1" fill="#000"/><rect x="51" y="746" width="5" height="1" fill="#000"/><rect x="51" y="751" width="5" height="1" fill="#000"/><rect x="51" y="757" width="5" height="1" fill="#000"/><rect x="51" y="762" width="5" height="1" fill="#000"/><rect x="48" y="767" width="8" height="1" fill="#000"/><rect x="51" y="773" width="5" height="1" fill="#000"/><rect x="51" y="778" width="5" height="1" fill="#000"/><rect x="51" y="783" width="5" height="1" fill="#000"/><rect x="51" y="789" width="5" height="1" fill="#000"/><rect x="46" y="794" width="10" height="1" fill="#000"/><rect x="51" y="800" width="5" height="1" fill="#000"/><rect x="51" y="805" width="5" height="1" fill="#000"/><rect x="51" y="810" width="5" height="1" fill="#000"/><rect x="51" y="816" width="5" height="1" fill="#000"/><rect x="48" y="821" width="8" height="1" fill="#000"/><rect x="51" y="827" width="5" height="1" fill="#000"/><rect x="51" y="832" width="5" height="1" fill="#000"/><rect x="51" y="837" width="5" height="1" fill="#000"/><rect x="51" y="843" width="5" height="1" fill="#000"/><rect x="46" y="848" width="10" height="1" fill="#000"/><rect x="51" y="853" width="5" height="1" fill="#000"/><rect x="51" y="859" width="5" height="1" fill="#000"/><rect x="51" y="864" width="5" height="1" fill="#000"/><rect x="51" y="870" width="5" height="1" fill="#000"/><rect x="56" y="136" width="1" height="738" fill="#000"/><rect x="35" y="320" width="22" height="1" fill="#000"/><rect x="35" y="314" width="22" height="1" fill="#000"/><g shape-rendering="auto"><text x="95.7" y="123" font-size="9" text-anchor="middle" font-family="Liberation Sans">0</text><text x="149.6" y="123" font-size="9" text-anchor="middle" font-family="Liberation Sans">65</text><text x="203.4" y="123" font-size="9" text-anchor="middle" font-family="Liberation Sans">130</text><text x="257.2" y="123" font-size="9" text-anchor="middle" font-family="Liberation Sans">195</text><text x="311.1" y="123" font-size="9" text-anchor="middle" font-family="Liberation Sans">260</text><text x="364.9" y="123" font-size="9" text-anchor="middle" font-family="Liberation Sans">325</text><text x="418.8" y="123" font-size="9" text-anchor="middle" font-family="Liberation Sans">390</text><text x="472.6" y="123" font-size="9" text-anchor="middle" font-family="Liberation Sans">455</text><text x="526.5" y="123" font-size="9" text-anchor="middle" font-family="Liberation Sans">520</text><text x="580.4" y="123" font-size="9" text-anchor="middle" font-family="Liberation Sans">585</text><text x="634.2" y="123" font-size="9" text-anchor="middle" font-family="Liberation Sans">650</text><text x="688.1" y="123" font-size="9" text-anchor="middle" font-family="Liberation Sans">715</text><text x="741.9" y="123" font-size="9" text-anchor="middle" font-family="Liberation Sans">780</text><text x="795.8" y="123" font-size="9" text-anchor="middle" font-family="Liberation Sans">845</text><text x="849.6" y="123" font-size="9" text-anchor="middle" font-family="Liberation Sans">910</text><text transform="translate(43.5,149.0) rotate(-90)" x="0" y="0" font-size="9" text-anchor="middle" font-family="Liberation Sans">-130</text><text transform="translate(43.5,202.8) rotate(-90)" x="0" y="0" font-size="9" text-anchor="middle" font-family="Liberation Sans">-65</text><text transform="translate(43.5,256.7) rotate(-90)" x="0" y="0" font-size="9" text-anchor="middle" font-family="Liberation Sans">0</text><text transform="translate(43.5,310.5) rotate(-90)" x="0" y="0" font-size="9" text-anchor="middle" font-family="Liberation Sans">65</text><text transform="translate(43.5,364.4) rotate(-90)" x="0" y="0" font-size="9" text-anchor="middle" font-family="Liberation Sans">130</text><text transform="translate(43.5,418.2) rotate(-90)" x="0" y="0" font-size="9" text-anchor="middle" font-family="Liberation Sans">195</text><text transform="translate(43.5,472.1) rotate(-90)" x="0" y="0" font-size="9" text-anchor="middle" font-family="Liberation Sans">260</text><text transform="translate(43.5,526.0) rotate(-90)" x="0" y="0" font-size="9" text-anchor="middle" font-family="Liberation Sans">325</text><text transform="translate(43.5,579.8) rotate(-90)" x="0" y="0" font-size="9" text-anchor="middle" font-family="Liberation Sans">390</text><text transform="translate(43.5,633.6) rotate(-90)" x="0" y="0" font-size="9" text-anchor="middle" font-family="Liberation Sans">455</text><text transform="translate(43.5,687.5) rotate(-90)" x="0" y="0" font-size="9" text-anchor="middle" font-family="Liberation Sans">520</text><text transform="translate(43.5,741.3) rotate(-90)" x="0" y="0" font-size="9" text-anchor="middle" font-family="Liberation Sans">585</text><text transform="translate(43.5,795.2) rotate(-90)" x="0" y="0" font-size="9" text-anchor="middle" font-family="Liberation Sans">650</text><text transform="translate(43.5,849.0) rotate(-90)" x="0" y="0" font-size="9" text-anchor="middle" font-family="Liberation Sans">715</text></g></svg>
<div style="left:103px;top:753px;width:745px;height:4px;background:#808080"></div>
<div style="left:843px;top:262px;width:5px;height:491px;background:#808080"></div>
<div style="left:97px;top:256px;width:747px;height:497px;border:1px solid #000"></div>
<div class="chk" style="left:883px;top:130px;width:16px;height:729px;"></div>
<div class="btn" style="left:883px;top:114px;width:16px;height:16px;"></div>
<svg style="position:absolute;left:883px;top:114px" width="16" height="16" viewBox="0 0 16 16" shape-rendering="crispEdges"><path d="M4.5 9.5 H11.5 L8 6 Z" fill="#000" shape-rendering="auto"/></svg>
<div class="btn" style="left:883px;top:859px;width:16px;height:16px;"></div>
<svg style="position:absolute;left:883px;top:859px" width="16" height="16" viewBox="0 0 16 16" shape-rendering="crispEdges"><path d="M4.5 6.5 H11.5 L8 10 Z" fill="#000" shape-rendering="auto"/></svg>
<div class="btn" style="left:883px;top:486px;width:16px;height:16px;"></div>
<div class="chk" style="left:51px;top:875px;width:816px;height:16px;"></div>
<div class="btn" style="left:35px;top:875px;width:16px;height:16px;"></div>
<svg style="position:absolute;left:35px;top:875px" width="16" height="16" viewBox="0 0 16 16" shape-rendering="crispEdges"><path d="M9.5 4.5 V11.5 L6 8 Z" fill="#000" shape-rendering="auto"/></svg>
<div class="btn" style="left:867px;top:875px;width:16px;height:16px;"></div>
<svg style="position:absolute;left:867px;top:875px" width="16" height="16" viewBox="0 0 16 16" shape-rendering="crispEdges"><path d="M6.5 4.5 V11.5 L10 8 Z" fill="#000" shape-rendering="auto"/></svg>
<div class="btn" style="left:450px;top:875px;width:16px;height:16px;"></div>
<div style="left:883px;top:875px;width:16px;height:16px;background:#d4d0c8"></div>
<div style="left:8px;top:116px;width:1px;height:3px;background:#b8b4ac"></div>
<div style="left:10px;top:116px;width:1px;height:3px;background:#b8b4ac"></div>
<div style="left:12px;top:116px;width:1px;height:3px;background:#b8b4ac"></div>
<div style="left:14px;top:116px;width:1px;height:3px;background:#b8b4ac"></div>
<div style="left:16px;top:116px;width:1px;height:3px;background:#b8b4ac"></div>
<div style="left:18px;top:116px;width:1px;height:3px;background:#b8b4ac"></div>
<div style="left:20px;top:116px;width:1px;height:3px;background:#b8b4ac"></div>
<div style="left:22px;top:116px;width:1px;height:3px;background:#b8b4ac"></div>
<div style="left:24px;top:116px;width:1px;height:3px;background:#b8b4ac"></div>
<div style="left:26px;top:116px;width:1px;height:3px;background:#b8b4ac"></div>
<div style="left:28px;top:116px;width:1px;height:3px;background:#b8b4ac"></div>
<div style="left:7px;top:124px;width:24px;height:24px;background:#b6bdd2;border:1px solid #0a246a"></div>
<svg style="position:absolute;left:13px;top:127px" width="12" height="19" viewBox="0 0 12 19" shape-rendering="crispEdges"><path d="M1 1 V15 L4.5 11.5 L7.5 17.5 L9.5 16.5 L6.5 10.5 H11 Z" fill="#fff" stroke="#000" stroke-width="1.2" shape-rendering="auto"/></svg>
<svg style="position:absolute;left:12px;top:152px" width="16" height="17" viewBox="0 0 16 17" shape-rendering="crispEdges"><path d="M2 16 Q3 9 7 7 L11 1" fill="none" stroke="#000" stroke-width="1.2" shape-rendering="auto"/><rect x="5.5" y="5.5" width="3" height="3" fill="#fff" stroke="#000"/><path d="M8 9 V15 L14 13 Z" fill="#fff" stroke="#000" shape-rendering="auto"/></svg>
<div style="left:8px;top:173px;width:22px;height:1px;background:#a0a0a0"></div>
<div style="left:8px;top:174px;width:22px;height:1px;background:#fff"></div>
<svg style="position:absolute;left:12px;top:184px" width="15" height="15" viewBox="0 0 15 15" shape-rendering="crispEdges"><path d="M3 3 L12 12" stroke="#000" stroke-width="1.2" shape-rendering="auto"/><rect x="1.5" y="1.5" width="3" height="3" fill="#fff" stroke="#5080a0"/><rect x="10.5" y="10.5" width="3" height="3" fill="#fff" stroke="#5080a0"/></svg>
<svg style="position:absolute;left:15px;top:206px" width="10" height="17" viewBox="0 0 10 17" shape-rendering="crispEdges"><path d="M5 0.5 L8 6 V16.5 H2 V6 Z" fill="#d0d0f0" stroke="#000" shape-rendering="auto"/><path d="M2 6.5 H8" stroke="#000"/><path d="M3 7 H7 V16 H3 Z" fill="#a0a0d0"/></svg>
<svg style="position:absolute;left:12px;top:231px" width="17" height="16" viewBox="0 0 17 16" shape-rendering="crispEdges"><path d="M2 3 L7 9 L12 14 M7 9 L12 5" stroke="#000" stroke-width="1.2" fill="none" shape-rendering="auto"/><rect x="1" y="2" width="3" height="3" fill="#000"/><rect x="6" y="8" width="3" height="3" fill="#000"/><rect x="11" y="13" width="3" height="3" fill="#000"/><path d="M11 4 Q12 0.5 15.5 1.5 Q14 5 11 4 Z" fill="#fff" stroke="#000" shape-rendering="auto"/></svg>
<svg style="position:absolute;left:13px;top:257px" width="14" height="13" viewBox="0 0 14 13" shape-rendering="crispEdges"><rect x="0.5" y="0.5" width="12" height="11" fill="#c8c8f0" stroke="#000"/><rect x="1" y="1" width="6" height="6" fill="#fff" opacity="0.6"/></svg>
<svg style="position:absolute;left:12px;top:280px" width="17" height="14" viewBox="0 0 17 14" shape-rendering="crispEdges"><ellipse cx="8" cy="6.5" rx="7.3" ry="5.3" fill="#c8c8f0" stroke="#000" shape-rendering="auto"/></svg>
<div style="left:13px;top:300px;font:bold 18px 'Liberation Serif',serif;color:#000080;line-height:20px">A</div>
<svg style="position:absolute;left:8px;top:330px" width="4" height="6" viewBox="0 0 4 6" shape-rendering="crispEdges"><path d="M3.5 0 V6 L0 3 Z" fill="#a0a0a0"/></svg>
<div style="left:331px;top:189px;width:524px;height:565px;background:#d4d0c8;box-shadow:inset -1px -1px #404040,inset 1px 1px #d4d0c8,inset -2px -2px #808080,inset 2px 2px #fff"></div>
<div style="left:334px;top:192px;width:518px;height:18px;background:linear-gradient(to right,#0a246a,#a6caf0)"></div>
<div class="t" style="left:336px;top:195px;font-weight:bold;color:#fff;letter-spacing:0.55px">Layer Parameters</div>
<div class="btn" style="left:834px;top:194px;width:16px;height:14px;"></div>
<svg style="position:absolute;left:834px;top:194px" width="16" height="14" viewBox="0 0 16 14" shape-rendering="crispEdges"><path d="M4 3 L11 10 M11 3 L4 10" stroke="#000" stroke-width="1.6" shape-rendering="auto"/></svg>
<div class="sunk" style="left:345px;top:218px;width:142px;height:522px;background:#fff"></div>
<div class="hdr" style="left:347px;top:220px;width:45px;height:16px;"></div>
<div class="hdr" style="left:392px;top:220px;width:93px;height:16px;"></div>
<div class="t" style="left:353px;top:222px;">Pen</div>
<div class="t" style="left:398px;top:222px;">Color</div>
<svg style="position:absolute;left:0;top:0" width="1184" height="943"><rect x="347" y="253" width="138" height="1" fill="#c8c8c8"/><rect x="347" y="270" width="138" height="1" fill="#c8c8c8"/><rect x="347" y="287" width="138" height="1" fill="#c8c8c8"/><rect x="347" y="304" width="138" height="1" fill="#c8c8c8"/><rect x="347" y="321" width="138" height="1" fill="#c8c8c8"/><rect x="347" y="338" width="138" height="1" fill="#c8c8c8"/><rect x="347" y="355" width="138" height="1" fill="#c8c8c8"/><rect x="347" y="372" width="138" height="1" fill="#c8c8c8"/><rect x="347" y="389" width="138" height="1" fill="#c8c8c8"/><rect x="347" y="406" width="138" height="1" fill="#c8c8c8"/><rect x="347" y="423" width="138" height="1" fill="#c8c8c8"/><rect x="347" y="440" width="138" height="1" fill="#c8c8c8"/><rect x="347" y="457" width="138" height="1" fill="#c8c8c8"/><rect x="347" y="474" width="138" height="1" fill="#c8c8c8"/><rect x="347" y="491" width="138" height="1" fill="#c8c8c8"/><rect x="347" y="508" width="138" height="1" fill="#c8c8c8"/><rect x="347" y="525" width="138" height="1" fill="#c8c8c8"/><rect x="347" y="542" width="138" height="1" fill="#c8c8c8"/><rect x="347" y="559" width="138" height="1" fill="#c8c8c8"/><rect x="347" y="576" width="138" height="1" fill="#c8c8c8"/><rect x="347" y="593" width="138" height="1" fill="#c8c8c8"/><rect x="347" y="610" width="138" height="1" fill="#c8c8c8"/><rect x="347" y="627" width="138" height="1" fill="#c8c8c8"/><rect x="347" y="644" width="138" height="1" fill="#c8c8c8"/><rect x="347" y="661" width="138" height="1" fill="#c8c8c8"/><rect x="347" y="678" width="138" height="1" fill="#c8c8c8"/><rect x="347" y="695" width="138" height="1" fill="#c8c8c8"/><rect x="347" y="712" width="138" height="1" fill="#c8c8c8"/><rect x="392" y="236" width="1" height="487" fill="#c8c8c8"/></svg>
<div style="left:393px;top:237px;width:92px;height:16px;background:#000"></div>
<div class="t" style="left:349px;top:239px;">0</div>
<div class="btn" style="left:363px;top:723px;width:107px;height:16px;"></div>
<div class="btn" style="left:347px;top:723px;width:16px;height:16px;"></div>
<svg style="position:absolute;left:347px;top:723px" width="16" height="16" viewBox="0 0 16 16" shape-rendering="crispEdges"><path d="M9.5 4.5 V11.5 L6 8 Z" fill="#000" shape-rendering="auto"/></svg>
<div class="btn" style="left:470px;top:723px;width:16px;height:16px;"></div>
<svg style="position:absolute;left:470px;top:723px" width="16" height="16" viewBox="0 0 16 16" shape-rendering="crispEdges"><path d="M6.5 4.5 V11.5 L10 8 Z" fill="#000" shape-rendering="auto"/></svg>
<div class="etch" style="left:498px;top:217px;width:230px;height:84px;"></div>
<div class="t" style="left:461.5px;top:230px;width:200px;text-align:center;">Layer:</div>
<div style="left:619px;top:222px;width:96px;height:23px;background:#000"></div>
<div class="t" style="left:461.0px;top:255px;width:200px;text-align:center;">Work Mode:</div>
<div class="sunk" style="left:619px;top:250px;width:96px;height:20px;background:#fff"></div>
<div style="left:622px;top:253px;width:75px;height:14px;background:#0a246a"></div>
<div class="t" style="left:623px;top:254.5px;color:#fff;width:73px;overflow:hidden">Cut after engra</div>
<div class="btn" style="left:697px;top:252px;width:16px;height:16px;"></div>
<svg style="position:absolute;left:697px;top:252px" width="16" height="16" viewBox="0 0 16 16" shape-rendering="crispEdges"><path d="M4.5 6.5 H11.5 L8 10 Z" fill="#000" shape-rendering="auto"/></svg>
<div class="sunk" style="left:537px;top:280px;width:13px;height:13px;background:#fff"></div>
<div class="t" style="left:555px;top:279.5px;">Lcd params control</div>
<div class="etch" style="left:498px;top:314px;width:230px;height:162px;"></div>
<div class="t" style="left:505.5px;top:309px;background:#d4d0c8;padding:0 2px">Cut Parameters</div>
<div class="t" style="left:462.5px;top:328.8px;width:200px;text-align:center;">Speed:</div>
<div class="sunk" style="left:622px;top:322px;width:95px;height:22px;background:#fff"></div>
<div class="t" style="left:626px;top:326px;color:#000">100.00</div>
<div class="t" style="left:462.5px;top:355px;width:200px;text-align:center;">Power1(%):</div>
<div class="sunk" style="left:622px;top:348px;width:95px;height:22px;background:#fff"></div>
<div class="t" style="left:626px;top:352px;color:#000">50.00</div>
<div class="t" style="left:462.5px;top:381.2px;width:200px;text-align:center;">Corner Power1(%):</div>
<div class="sunk" style="left:622px;top:374px;width:95px;height:22px;background:#fff"></div>
<div class="t" style="left:626px;top:378px;color:#000">30.00</div>
<div class="t" style="left:462.5px;top:406.8px;width:200px;text-align:center;">Power2(%):</div>
<div class="sunk" style="left:622px;top:400px;width:95px;height:22px;background:#fff"></div>
<div class="t" style="left:626px;top:404px;color:#000">0.00</div>
<div class="t" style="left:462.5px;top:433px;width:200px;text-align:center;">Corner Power2(%):</div>
<div class="sunk" style="left:622px;top:426px;width:95px;height:22px;background:#fff"></div>
<div class="t" style="left:626px;top:430px;color:#000">0.00</div>
<div class="btn" style="left:667px;top:449px;width:50px;height:27px;"></div>
<div class="t" style="left:667px;top:459px;width:50px;text-align:center;">...</div>
<div class="etch" style="left:498px;top:489px;width:230px;height:251px;"></div>
<div class="t" style="left:505.5px;top:484px;background:#d4d0c8;padding:0 2px">Engrave Parameters</div>
<div class="t" style="left:464.0px;top:503.79999999999995px;width:200px;text-align:center;">Speed:</div>
<div class="sunk" style="left:622px;top:497px;width:95px;height:22px;background:#fff"></div>
<div class="t" style="left:626px;top:501px;color:#000">0.00</div>
<div class="t" style="left:464.0px;top:529.3px;width:200px;text-align:center;">Power1(%):</div>
<div class="sunk" style="left:622px;top:523px;width:95px;height:22px;background:#fff"></div>
<div class="t" style="left:626px;top:527px;color:#000">0.00</div>
<div class="t" style="left:464.0px;top:553px;width:200px;text-align:center;">Power2(%):</div>
<div class="sunk" style="left:622px;top:548px;width:95px;height:22px;background:#fff"></div>
<div class="t" style="left:626px;top:552px;color:#000">0.00</div>
<div class="t" style="left:464.0px;top:578.6px;width:200px;text-align:center;">Scan gap(mm):</div>
<div class="sunk" style="left:622px;top:573px;width:95px;height:22px;background:#fff"></div>
<div class="t" style="left:626px;top:577px;color:#000">0.10</div>
<div class="t" style="left:464.0px;top:607px;width:200px;text-align:center;">Engrave Mode:</div>
<div class="sunk" style="left:622px;top:599px;width:95px;height:20px;background:#fff"></div>
<div class="t" style="left:624px;top:603px;">X_swing</div>
<div class="btn" style="left:699px;top:601px;width:16px;height:16px;"></div>
<svg style="position:absolute;left:699px;top:601px" width="16" height="16" viewBox="0 0 16 16" shape-rendering="crispEdges"><path d="M4.5 6.5 H11.5 L8 10 Z" fill="#000" shape-rendering="auto"/></svg>
<div class="t" style="left:464.0px;top:635px;width:200px;text-align:center;">GradeEngrave:</div>
<div class="etch" style="left:622px;top:627px;width:95px;height:26px;"></div>
<svg style="position:absolute;left:632px;top:635px" width="12" height="12" viewBox="0 0 12 12" shape-rendering="crispEdges"><circle cx="6" cy="6" r="5.5" fill="#fff"/><path d="M2.1 9.9 A5.5 5.5 0 0 1 9.9 2.1" stroke="#808080" fill="none"/><path d="M2.8 9.2 A4.5 4.5 0 0 1 9.2 2.8" stroke="#404040" fill="none"/><path d="M9.9 2.1 A5.5 5.5 0 0 1 2.1 9.9" stroke="#fff" fill="none"/><path d="M9.2 2.8 A4.5 4.5 0 0 1 2.8 9.2" stroke="#d4d0c8" fill="none"/></svg>
<div class="t" style="left:649px;top:636px;">Ye:</div>
<svg style="position:absolute;left:676px;top:635px" width="12" height="12" viewBox="0 0 12 12" shape-rendering="crispEdges"><circle cx="6" cy="6" r="5.5" fill="#fff"/><path d="M2.1 9.9 A5.5 5.5 0 0 1 9.9 2.1" stroke="#808080" fill="none"/><path d="M2.8 9.2 A4.5 4.5 0 0 1 9.2 2.8" stroke="#404040" fill="none"/><path d="M9.9 2.1 A5.5 5.5 0 0 1 2.1 9.9" stroke="#fff" fill="none"/><path d="M9.2 2.8 A4.5 4.5 0 0 1 2.8 9.2" stroke="#d4d0c8" fill="none"/><circle cx="6" cy="6" r="2" fill="#000"/></svg>
<div class="t" style="left:693px;top:636px;">No</div>
<div class="t" style="left:464.0px;top:664.1px;width:200px;text-align:center;">Grade Length(mm):</div>
<div class="sunk" style="left:622px;top:659px;width:95px;height:22px;background:#d4d0c8"></div>
<div class="t" style="left:626px;top:663px;color:#a0a0a0">0.00</div>
<div class="t" style="left:464.0px;top:690.3px;width:200px;text-align:center;">Min Power1(%):</div>
<div class="sunk" style="left:622px;top:687px;width:95px;height:22px;background:#d4d0c8"></div>
<div class="t" style="left:626px;top:691px;color:#a0a0a0">0.00</div>
<div class="t" style="left:464.0px;top:718.8px;width:200px;text-align:center;">Min Power2(%):</div>
<div class="sunk" style="left:622px;top:713px;width:95px;height:22px;background:#d4d0c8"></div>
<div class="t" style="left:626px;top:717px;color:#a0a0a0">0.00</div>
<div style="left:759px;top:224px;width:83px;height:33px;background:#000"></div>
<div class="btn" style="left:760px;top:225px;width:81px;height:31px;"></div>
<div class="t" style="left:759px;top:234.5px;width:83px;text-align:center;">OK</div>
<div class="btn" style="left:759px;top:268px;width:83px;height:33px;"></div>
<div class="t" style="left:759px;top:278.5px;width:83px;text-align:center;">Cancel</div>
<div class="btn" style="left:730px;top:716px;width:96px;height:24px;"></div>
<div class="t" style="left:731px;top:723.0px;width:96px;text-align:center;color:#fff;">Hole Parameters</div>
<div class="t" style="left:730px;top:722.0px;width:96px;text-align:center;color:#808080;">Hole Parameters</div>
<svg style="position:absolute;left:0;top:0" width="1184" height="943"><ellipse cx="636.5" cy="412.3" rx="115.7" ry="15.4" fill="none" stroke="#d83030" stroke-width="1.1"/><ellipse cx="638.2" cy="558.5" rx="116.3" ry="16.2" fill="none" stroke="#2a8a2a" stroke-width="1.1"/></svg>
<div style="left:902px;top:114px;width:1px;height:776px;background:repeating-linear-gradient(#c8c5be 0 1px,transparent 1px 3px)"></div>
<div style="left:905px;top:112px;width:276px;height:17px;background:#0a246a"></div>
<div class="t" style="left:907px;top:114.5px;color:#fff">Control Panel</div>
<svg style="position:absolute;left:1168px;top:116px" width="9" height="9" viewBox="0 0 9 9" shape-rendering="crispEdges"><path d="M1 1 L8 8 M8 1 L1 8" stroke="#fff" shape-rendering="auto"/></svg>
<div class="etch" style="left:905px;top:139px;width:268px;height:44px;"></div>
<div class="t" style="left:913px;top:134px;background:#dcd9d3;padding:0 2px">Communication mode</div>
<div class="btn" style="left:937px;top:150px;width:95px;height:23px;"></div>
<div class="t" style="left:937px;top:155.5px;width:95px;text-align:center;">Select Mode</div>
<div class="sunk1" style="left:1037px;top:151px;width:128px;height:21px;"></div>
<div class="t" style="left:1041px;top:155px;">IP: 192.168.8.8</div>
<div class="etch" style="left:905px;top:196px;width:268px;height:184px;"></div>
<div class="t" style="left:912.5px;top:191px;background:#dcd9d3;padding:0 2px">Layer Options</div>
<div class="sunk" style="left:911px;top:210px;width:258px;height:136px;background:#fff"></div>
<div class="hdr" style="left:913px;top:212px;width:38px;height:17px;"></div>
<div class="t" style="left:918px;top:214.5px;">Layer</div>
<div class="hdr" style="left:951px;top:212px;width:65px;height:17px;"></div>
<div class="t" style="left:957px;top:214.5px;">Mode</div>
<div class="hdr" style="left:1016px;top:212px;width:54px;height:17px;"></div>
<div class="t" style="left:1022px;top:214.5px;">Speed</div>
<div class="hdr" style="left:1070px;top:212px;width:54px;height:17px;"></div>
<div class="t" style="left:1077.5px;top:214.5px;">Power</div>
<div class="hdr" style="left:1124px;top:212px;width:40px;height:17px;"></div>
<div class="t" style="left:1131.5px;top:214.5px;">Out...</div>
<div class="hdr" style="left:1164px;top:212px;width:3px;height:17px;"></div>
<div style="left:913px;top:229px;width:254px;height:16px;background:#d4d0c8"></div>
<div style="left:913px;top:229px;width:39px;height:16px;background:#000"></div>
<div class="t" style="left:955px;top:231.5px;">Engrave</div>
<div class="t" style="left:1020px;top:231.5px;">0.00</div>
<div class="t" style="left:1074px;top:231.5px;">0.00</div>
<div class="sunk" style="left:1126px;top:229px;width:14px;height:15px;background:#fff"></div>
<svg style="position:absolute;left:1126px;top:229px" width="14" height="15" viewBox="0 0 14 15" shape-rendering="crispEdges"><path d="M3.5 7 L5.5 10 L10.5 4" fill="none" stroke="#000" stroke-width="2" shape-rendering="auto"/></svg>
<svg style="position:absolute;left:0;top:0" width="1184" height="943"><rect x="913" y="262" width="254" height="1" fill="#c8c8c8"/><rect x="913" y="279" width="254" height="1" fill="#c8c8c8"/><rect x="913" y="296" width="254" height="1" fill="#c8c8c8"/><rect x="913" y="313" width="254" height="1" fill="#c8c8c8"/><rect x="913" y="330" width="254" height="1" fill="#c8c8c8"/><rect x="952" y="245" width="1" height="99" fill="#c8c8c8"/><rect x="1017" y="245" width="1" height="99" fill="#c8c8c8"/><rect x="1071" y="245" width="1" height="99" fill="#c8c8c8"/><rect x="1125" y="245" width="1" height="99" fill="#c8c8c8"/><rect x="1165" y="245" width="1" height="99" fill="#c8c8c8"/></svg>
<div class="btn" style="left:943px;top:351px;width:41px;height:26px;"></div>
<div class="t" style="left:943px;top:358.0px;width:41px;text-align:center;">Up</div>
<div class="btn" style="left:991px;top:351px;width:41px;height:26px;"></div>
<div class="t" style="left:991px;top:358.0px;width:41px;text-align:center;">Down</div>
<div class="btn" style="left:1043px;top:351px;width:41px;height:26px;"></div>
<div class="t" style="left:1043px;top:358.0px;width:41px;text-align:center;">Top</div>
<div class="btn" style="left:1090px;top:351px;width:42px;height:26px;"></div>
<div class="t" style="left:1090px;top:358.0px;width:42px;text-align:center;">Bottom</div>
<div class="etch" style="left:905px;top:395px;width:268px;height:198px;"></div>
<div class="t" style="left:912.5px;top:390px;background:#dcd9d3;padding:0 2px">Machine Control</div>
<div class="btn" style="left:911px;top:406px;width:63px;height:29px;"></div>
<div class="t" style="left:911px;top:414.5px;width:63px;text-align:center;">Origin</div>
<div class="btn" style="left:976px;top:406px;width:63px;height:29px;"></div>
<div class="t" style="left:976px;top:414.5px;width:63px;text-align:center;">Run Box</div>
<div class="btn" style="left:1040px;top:406px;width:63px;height:29px;"></div>
<div class="t" style="left:1040px;top:414.5px;width:63px;text-align:center;">Clip Box</div>
<div class="btn" style="left:1105px;top:406px;width:63px;height:29px;"></div>
<div class="t" style="left:1105px;top:414.5px;width:63px;text-align:center;">Light</div>
<div style="left:911px;top:437px;width:63px;height:29px;background:#000"></div>
<div class="btn" style="left:912px;top:438px;width:61px;height:27px;"></div>
<div class="t" style="left:911px;top:445.5px;width:63px;text-align:center;">Download</div>
<div class="btn" style="left:976px;top:437px;width:63px;height:29px;"></div>
<div class="t" style="left:976px;top:445.5px;width:63px;text-align:center;">Start</div>
<div class="btn" style="left:1040px;top:437px;width:63px;height:29px;"></div>
<div class="t" style="left:1042px;top:447px;width:59px;overflow:hidden;text-align:left"><span style="position:relative;left:-7.5px">Pause/Continue</span></div>
<div class="btn" style="left:1105px;top:437px;width:63px;height:29px;"></div>
<div class="t" style="left:1105px;top:445.5px;width:63px;text-align:center;">Stop</div>
<div class="btn" style="left:980px;top:479px;width:41px;height:34px;"></div>
<div class="t" style="left:980px;top:490.0px;width:41px;text-align:center;">Y+</div>
<div class="btn" style="left:937px;top:515px;width:41px;height:34px;"></div>
<div class="t" style="left:937px;top:526.0px;width:41px;text-align:center;">X-</div>
<div class="btn" style="left:980px;top:515px;width:41px;height:34px;"></div>
<div class="t" style="left:980px;top:526.0px;width:41px;text-align:center;">Datum</div>
<div class="btn" style="left:1022px;top:515px;width:41px;height:34px;"></div>
<div class="t" style="left:1022px;top:526.0px;width:41px;text-align:center;">X+</div>
<div class="btn" style="left:980px;top:551px;width:41px;height:34px;"></div>
<div class="t" style="left:980px;top:562.0px;width:41px;text-align:center;">Y-</div>
<div class="btn" style="left:1097px;top:479px;width:41px;height:34px;"></div>
<div class="t" style="left:1097px;top:490.0px;width:41px;text-align:center;">Z+</div>
<div class="btn" style="left:1097px;top:515px;width:41px;height:34px;"></div>
<div class="t" style="left:1097px;top:526.0px;width:41px;text-align:center;">Datum</div>
<div class="btn" style="left:1097px;top:551px;width:41px;height:34px;"></div>
<div class="t" style="left:1097px;top:562.0px;width:41px;text-align:center;">Z-</div>
<div class="etch" style="left:905px;top:594px;width:268px;height:66px;"></div>
<div class="btn" style="left:931px;top:600px;width:122px;height:26px;"></div>
<div class="t" style="left:931px;top:607.0px;width:122px;text-align:center;">Read Current Pos:</div>
<div class="btn" style="left:931px;top:627px;width:122px;height:26px;"></div>
<div class="t" style="left:931px;top:634.0px;width:122px;text-align:center;">Move to Pos:</div>
<div class="t" style="left:1067px;top:609px;">X=</div>
<div class="sunk" style="left:1084px;top:603px;width:65px;height:22px;background:#fff"></div>
<div class="t" style="left:1088px;top:607px;color:#000">100</div>
<div class="t" style="left:1067px;top:635px;">Y=</div>
<div class="sunk" style="left:1084px;top:629px;width:65px;height:22px;background:#fff"></div>
<div class="t" style="left:1088px;top:633px;color:#000">100</div>
<div style="left:4px;top:919px;width:1178px;height:1px;background:#d2cfc8"></div>
<div style="left:10px;top:899px;width:4px;height:1px;background:#c4c1ba"></div>
<div style="left:10px;top:901px;width:4px;height:1px;background:#c4c1ba"></div>
<div style="left:10px;top:903px;width:4px;height:1px;background:#c4c1ba"></div>
<div style="left:10px;top:905px;width:4px;height:1px;background:#c4c1ba"></div>
<div style="left:10px;top:907px;width:4px;height:1px;background:#c4c1ba"></div>
<div style="left:10px;top:909px;width:4px;height:1px;background:#c4c1ba"></div>
<div style="left:10px;top:911px;width:4px;height:1px;background:#c4c1ba"></div>
<div style="left:10px;top:913px;width:4px;height:1px;background:#c4c1ba"></div>
<div style="left:10px;top:915px;width:4px;height:1px;background:#c4c1ba"></div>
<svg style="position:absolute;left:20px;top:899px" width="13" height="14" viewBox="0 0 13 14" shape-rendering="crispEdges"><path d="M1 0 V13" stroke="#a8a49c" stroke-width="2"/><rect x="3.5" y="1.5" width="7" height="3" fill="none" stroke="#a8a49c"/><rect x="3.5" y="7.5" width="9" height="3" fill="none" stroke="#a8a49c"/><path d="M3 12.5 H9" stroke="#a8a49c"/></svg>
<svg style="position:absolute;left:43px;top:899px" width="13" height="14" viewBox="0 0 13 14" shape-rendering="crispEdges"><path d="M12 0 V13" stroke="#a8a49c" stroke-width="2"/><rect x="2.5" y="1.5" width="7" height="3" fill="none" stroke="#a8a49c"/><rect x="0.5" y="7.5" width="9" height="3" fill="none" stroke="#a8a49c"/><path d="M4 12.5 H10" stroke="#a8a49c"/></svg>
<svg style="position:absolute;left:66px;top:899px" width="13" height="14" viewBox="0 0 13 14" shape-rendering="crispEdges"><path d="M0 1 H13" stroke="#a8a49c" stroke-width="2"/><rect x="1.5" y="3.5" width="3" height="7" fill="none" stroke="#a8a49c"/><rect x="6.5" y="3.5" width="3" height="9" fill="none" stroke="#a8a49c"/><path d="M11.5 3 V10" stroke="#a8a49c"/></svg>
<svg style="position:absolute;left:88px;top:899px" width="14" height="14" viewBox="0 0 14 14" shape-rendering="crispEdges"><path d="M0 12 H14" stroke="#a8a49c" stroke-width="2"/><rect x="1.5" y="3.5" width="3" height="7" fill="none" stroke="#a8a49c"/><rect x="6.5" y="1.5" width="3" height="9" fill="none" stroke="#a8a49c"/><path d="M11.5 3 V10" stroke="#a8a49c"/></svg>
<svg style="position:absolute;left:111px;top:899px" width="13" height="14" viewBox="0 0 13 14" shape-rendering="crispEdges"><path d="M0 6.5 H13" stroke="#a8a49c"/><rect x="3.5" y="3.5" width="6" height="6" fill="none" stroke="#a8a49c"/><path d="M1.5 4 V9 M11.5 4 V9" stroke="#a8a49c"/></svg>
<svg style="position:absolute;left:134px;top:899px" width="13" height="14" viewBox="0 0 13 14" shape-rendering="crispEdges"><path d="M6.5 0 V13" stroke="#a8a49c"/><rect x="2.5" y="2.5" width="8" height="3" fill="none" stroke="#a8a49c"/><rect x="1.5" y="7.5" width="10" height="3" fill="none" stroke="#a8a49c"/></svg>
<svg style="position:absolute;left:158px;top:899px" width="14" height="14" viewBox="0 0 14 14" shape-rendering="crispEdges"><rect x="0.5" y="0.5" width="13" height="13" fill="none" stroke="#a8a49c"/><path d="M7 0 V14 M0 7 H14" stroke="#a8a49c"/><rect x="3.5" y="3.5" width="7" height="7" fill="none" stroke="#a8a49c"/></svg>
<div style="left:178px;top:897px;width:1px;height:20px;background:#9c9992"></div>
<div style="left:179px;top:897px;width:1px;height:20px;background:#eceae4"></div>
<svg style="position:absolute;left:187px;top:898px" width="17" height="17" viewBox="0 0 17 17" shape-rendering="crispEdges"><path d="M8.5 0 V17 M0 8.5 H17" stroke="#000" stroke-width="1.6"/><path d="M6 4 H11 L13 6 V11 L11 13 H6 L4 11 V6 Z" fill="#ff0000"/><path d="M8.5 4 V13 M4 8.5 H13" stroke="#c00000" stroke-width="0.6"/></svg>
<svg style="position:absolute;left:212px;top:912px" width="6" height="4" viewBox="0 0 6 4" shape-rendering="crispEdges"><path d="M0 0 H6 L3 3 Z" fill="#808080"/></svg>
<div style="left:227px;top:899px;width:4px;height:1px;background:#c4c1ba"></div>
<div style="left:227px;top:901px;width:4px;height:1px;background:#c4c1ba"></div>
<div style="left:227px;top:903px;width:4px;height:1px;background:#c4c1ba"></div>
<div style="left:227px;top:905px;width:4px;height:1px;background:#c4c1ba"></div>
<div style="left:227px;top:907px;width:4px;height:1px;background:#c4c1ba"></div>
<div style="left:227px;top:909px;width:4px;height:1px;background:#c4c1ba"></div>
<div style="left:227px;top:911px;width:4px;height:1px;background:#c4c1ba"></div>
<div style="left:227px;top:913px;width:4px;height:1px;background:#c4c1ba"></div>
<div style="left:227px;top:915px;width:4px;height:1px;background:#c4c1ba"></div>
<div style="left:236px;top:899px;width:16px;height:15px;background:#000000"></div>
<div style="left:259px;top:899px;width:16px;height:15px;background:#0000ff"></div>
<div style="left:282px;top:899px;width:16px;height:15px;background:#ff0000"></div>
<div style="left:305px;top:899px;width:16px;height:15px;background:#00ff00"></div>
<div style="left:328px;top:899px;width:16px;height:15px;background:#ff99cc"></div>
<div style="left:351px;top:899px;width:16px;height:15px;background:#ffff00"></div>
<div style="left:374px;top:899px;width:16px;height:15px;background:#00ffff"></div>
<div style="left:397px;top:899px;width:16px;height:15px;background:#996633"></div>
<div style="left:420px;top:899px;width:16px;height:15px;background:#008000"></div>
<div style="left:443px;top:899px;width:16px;height:15px;background:#9999cc"></div>
<div style="left:466px;top:899px;width:16px;height:15px;background:#800080"></div>
<div style="left:489px;top:899px;width:16px;height:15px;background:#0099cc"></div>
<div style="left:512px;top:899px;width:16px;height:15px;background:#ff9900"></div>
<div style="left:535px;top:899px;width:16px;height:15px;background:#99ccff"></div>
<div style="left:558px;top:899px;width:16px;height:15px;background:#808080"></div>
<div style="left:581px;top:899px;width:16px;height:15px;background:#000080"></div>
<div style="left:604px;top:899px;width:16px;height:15px;background:#808000"></div>
<div style="left:627px;top:899px;width:16px;height:15px;background:#ff0099"></div>
<div style="left:650px;top:899px;width:16px;height:15px;background:#008080"></div>
<div style="left:673px;top:899px;width:16px;height:15px;background:#99ff00"></div>
<svg style="position:absolute;left:699px;top:912px" width="6" height="4" viewBox="0 0 6 4" shape-rendering="crispEdges"><path d="M0 0 H6 L3 3 Z" fill="#808080"/></svg>
<div class="t" style="left:7px;top:924px;">Right</div>
<div style="left:413px;top:922px;width:146px;height:17px;border:1px solid #8a8780;border-right-color:#a8a59e;border-bottom-color:#a8a59e"></div>
<div class="t" style="left:415px;top:925px;letter-spacing:0.05px">X=932.90;Y=76.66</div>
<div style="left:561px;top:922px;width:137px;height:17px;border:1px solid #8a8780;border-right-color:#a8a59e;border-bottom-color:#a8a59e"></div>
<div class="t" style="left:563px;top:925px;letter-spacing:0.05px">Worked Times:00:00:00</div>
<div style="left:699px;top:922px;width:205px;height:17px;border:1px solid #8a8780;border-right-color:#a8a59e;border-bottom-color:#a8a59e"></div>
<div class="t" style="left:701px;top:925px;letter-spacing:0.05px">Laser Pos:X=0.00;Y=0.00</div>
<div style="left:906px;top:922px;width:257px;height:17px;border:1px solid #8a8780;border-right-color:#a8a59e;border-bottom-color:#a8a59e"></div>
<div class="t" style="left:908px;top:925px;letter-spacing:0.05px">Lightobject.com</div>
<svg style="position:absolute;left:1166px;top:925px" width="14" height="14" viewBox="0 0 14 14" shape-rendering="crispEdges"><path d="M13 1 L1 13 M13 5 L5 13 M13 9 L9 13" stroke="#808080" stroke-width="1.2" shape-rendering="auto"/><path d="M13 2 L2 13 M13 6 L6 13 M13 10 L10 13" stroke="#fff" shape-rendering="auto"/></svg></body></html>
